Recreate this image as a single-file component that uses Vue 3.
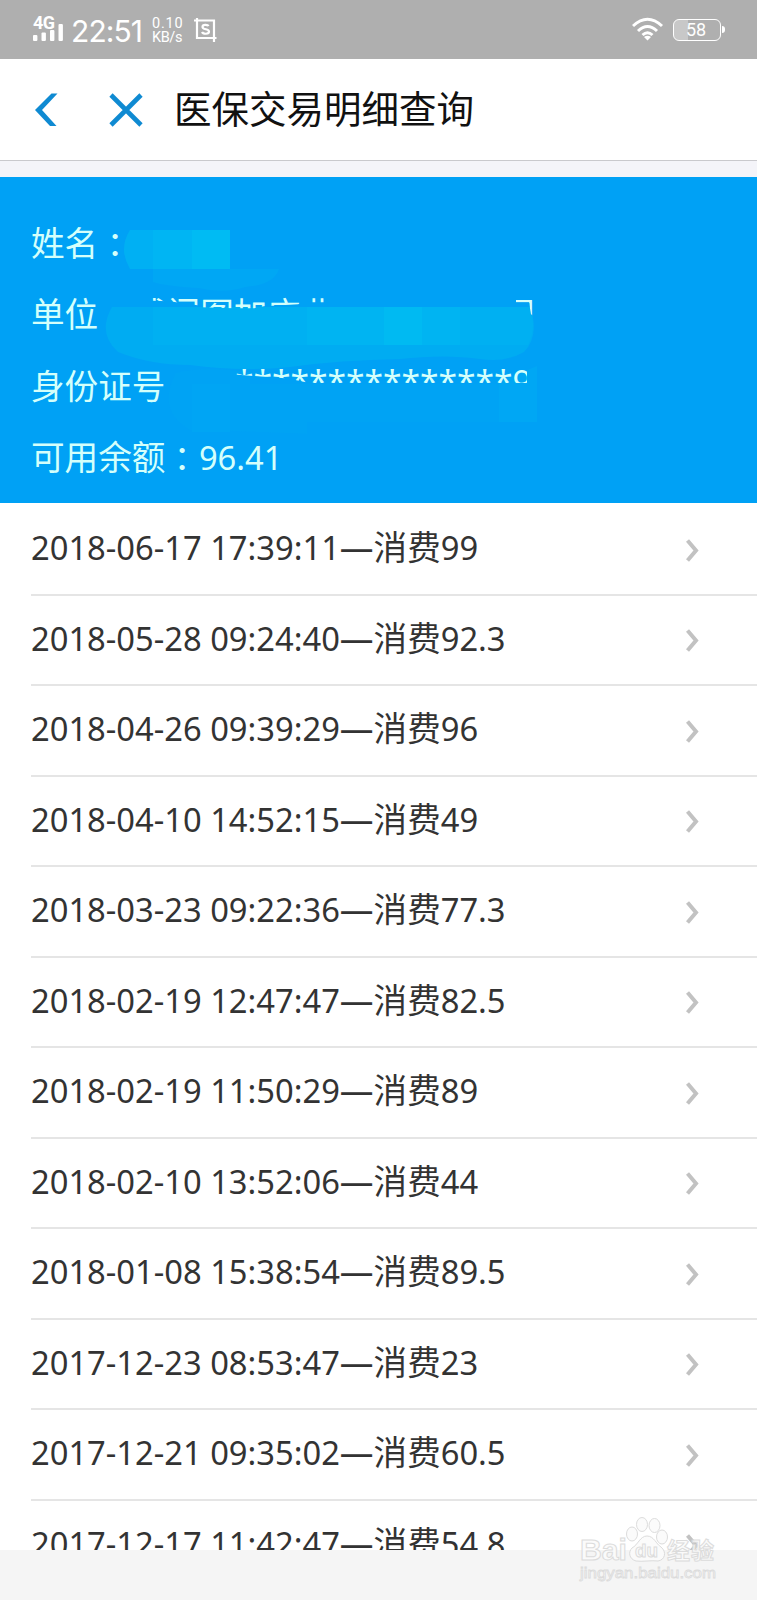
<script setup>
const records = [
  ['2018-06-17 17:39:11', '99'], ['2018-05-28 09:24:40', '92.3'],
  ['2018-04-26 09:39:29', '96'], ['2018-04-10 14:52:15', '49'],
  ['2018-03-23 09:22:36', '77.3'], ['2018-02-19 12:47:47', '82.5'],
  ['2018-02-19 11:50:29', '89'], ['2018-02-10 13:52:06', '44'],
  ['2018-01-08 15:38:54', '89.5'], ['2017-12-23 08:53:47', '23'],
  ['2017-12-21 09:35:02', '60.5'], ['2017-12-17 11:42:47', '54.8'],
]
</script>

<template>
  <div class="screen">
    <header class="status">
      <div class="signal">
        <b>4G</b>
        <svg width="30" height="17" viewBox="0 0 30 17" fill="#fff">
          <rect x="0" y="11" width="4.4" height="6" rx="1" /><rect x="8.5" y="8.5" width="4.4" height="8.5" rx="1" />
          <rect x="17" y="6" width="4.4" height="11" rx="1" /><rect x="25.5" y="0" width="4.4" height="17" rx="1" />
        </svg>
      </div>
      <span class="clock">22:51</span>
      <div class="speed"><span>0.10</span><span>KB/s</span></div>
      <div class="shot">
        <svg width="24" height="24" viewBox="0 0 24 24" fill="none" stroke="#fff" stroke-width="2.2">
          <path d="M3 0V20H21M0 2.5H20V24M19 20H22.5" />
          <path d="M14.500 8.200C14 6.600 8.500 6.200 8.500 9C8.500 12 15 10.600 15 13.600C15 16.500 9 16.300 8 14" />
        </svg>
      </div>
      <svg class="wifi" width="32" height="24" viewBox="0 0 32 24" fill="none" stroke="#fff" stroke-width="3">
        <path d="M1 9Q15.500 -4.500 30 9M6 14Q15.500 5 25 14M10.500 18Q15.500 13.400 20.500 18" />
        <path d="M12 20Q15.500 17.500 19 20L15.500 23.500Z" fill="#fff" stroke="none" />
      </svg>
      <div class="battery"><span>58</span></div>
    </header>

    <nav class="nav">
      <svg class="back" width="23" height="34" viewBox="0 0 23 34"><path d="M16.500 .5H22.500L7 17L21.500 33H15L0 17Z" fill="#0f8ad2" /></svg>
      <svg class="close" width="34" height="34" viewBox="0 0 34 34"><path d="M2 2L32 32M32 2L2 32" stroke="#0f8ad2" stroke-width="4.600" /></svg>
      <h1>医保交易明细查询</h1>
    </nav>

    <section class="card">
      <svg class="smudge" width="757" height="326" viewBox="0 177 757 326">
        <path d="M153 269H268V269H279Q274 285 245 287Q225 294 198 288Q165 286 153 282Z" fill="#00a7f4" />
        <path d="M130 230H230V269H130Q118 249 130 230Z" fill="#00b0f3" />
        <path d="M153 230H192V269H153Z" fill="#00b5f3" /><path d="M192 230H230V269H192Z" fill="#00bbf3" />
        <path d="M112 307H530Q540 335 524 352Q505 363 480 359Q445 354 400 359Q340 360 290 367Q240 372 190 365Q150 365 118 352Q97 333 112 307Z" fill="#00acf2" />
        <path d="M153 307H530Q537 327 528 345H153Z" fill="#00b0f2" />
        <path d="M307 307H384V345H307Z" fill="#00b4f2" /><path d="M384 307H422V345H384Z" fill="#00baf2" /><path d="M422 307H460V345H422Z" fill="#00b4f2" />
        <path d="M176 373Q200 366 250 372V384H537V422H307V434Q220 430 190 430Q156 410 176 373Z" fill="#00a3f4" />
        <path d="M192 384H230V432H192Z" fill="#00a5f4" /><path d="M499 382L537 366V422H499Z" fill="#00a7f4" />
      </svg>
      <p>姓名<span class="colon">：</span></p>
      <p>单位 <span class="unit">咸门图加应业</span><span class="unit-end">司</span></p>
      <p>身份证号<span class="idno">***************9</span></p>
      <p>可用余额<span class="colon">：</span><span class="num">96.41</span></p>
    </section>

    <main class="list">
      <div v-for="(r, i) in records" :key="i" class="row">
        <span class="label"><span class="num">{{ r[0] }}</span><span class="dash">—</span>消费<span class="num">{{ r[1] }}</span></span>
        <svg width="13" height="23" viewBox="0 0 13 23" fill="none" stroke="#c2c2c2" stroke-width="4"><path d="M1.500 1.500L10 11.500L1.500 21.500" /></svg>
      </div>
    </main>

    <div class="watermark">
      <svg width="150" height="80" viewBox="0 0 150 80" fill="#fbfbfb" stroke="#d9d9d9" stroke-width="1">
        <ellipse cx="62" cy="18" rx="5.500" ry="7" /><ellipse cx="72" cy="8.500" rx="5.500" ry="7" />
        <ellipse cx="84.500" cy="9.500" rx="5.500" ry="7" /><ellipse cx="92" cy="21" rx="5.500" ry="7" />
        <path d="M77 20C70 20 68 29 62 32C58 36 59 43 66 45C72 46 82 44 88 45C95 44 97 36 91 31C86 28 84 20 77 20Z" />
        <text x="10" y="44" font-size="29" font-weight="700" textLength="47" lengthAdjust="spacingAndGlyphs">Bai</text>
        <text x="65" y="41" font-size="19" font-weight="700" textLength="23" lengthAdjust="spacingAndGlyphs">du</text>
        <text x="97" y="43" font-size="23" font-weight="700" textLength="47">经验</text>
        <text x="10" y="62" font-size="15" textLength="136" lengthAdjust="spacingAndGlyphs" stroke-width=".8">jingyan.baidu.com</text>
      </svg>
    </div>
  </div>
</template>

<style>
body { margin: 0; background: #f5f5f5; }
</style>

<style scoped>
.screen { position: relative; width: 757px; height: 1600px; overflow: hidden; background: #f5f5f5; font-family: "Noto Sans CJK SC", sans-serif; }
.status { box-sizing: border-box; height: 59px; display: flex; align-items: flex-start; background: #afafaf; color: #fff; font-family: Roboto, sans-serif; padding-left: 33px; }
.signal { position: relative; width: 31px; height: 59px; }
.signal b { display: block; margin-top: 14px; font-size: 18px; line-height: 17px; letter-spacing: -.7px; }
.signal svg { position: absolute; left: 0; top: 24px; }
.clock { width: 77px; margin: 15px 0 0 7px; font: 30px/32px Inter, sans-serif; letter-spacing: -.9px; white-space: nowrap; }
.speed { width: 36px; margin: 17px 0 0 4px; display: flex; flex-direction: column; font-size: 14.5px; line-height: 14px; }
.speed span:first-child { letter-spacing: .8px; }
.speed span:last-child { letter-spacing: -.4px; }
.shot { margin: 18px 0 0 6px; }
.wifi { margin: 17px 0 0 414px; }
.battery { position: relative; box-sizing: border-box; width: 48px; height: 22px; margin: 19px 0 0 9px; border: 1.5px solid #fff; border-radius: 6px; font-size: 18px; line-height: 20px; text-align: center; background: linear-gradient(90deg, #c8c8c8 30%, transparent 30%); }
.battery::after { content: ""; position: absolute; right: -5px; top: 6px; width: 3px; height: 7px; border-radius: 0 3px 3px 0; background: #fff; }
.battery span { margin-left: -2px; }
.nav { box-sizing: border-box; height: 102px; border-bottom: 1px solid #c9c9cd; background: #fff; display: flex; align-items: center; padding-left: 35px; }
.close { margin-left: 51px; }
h1 { margin: -5px 0 0 31px; font-weight: 400; font-size: 37.5px; line-height: 56px; color: #111; }
.card { position: relative; box-sizing: border-box; height: 342px; border-top: 16px solid #f4f4f9; padding: 29px 0 0 31px; background: #00a1f5; color: #d4fffb; font-size: 33.6px; }
.card p { position: relative; margin: 0; height: 71.3px; line-height: 71.3px; white-space: nowrap; }
.colon { position: relative; top: 2px; line-height: 1; font-family: "Noto Sans CJK TC", sans-serif; }
.smudge { position: absolute; left: 0; top: 0; }
.unit { position: absolute; left: 102px; top: 0; clip-path: polygon(0 0, 100% 0, 100% 25px, 84% 25px, 82% 27px, 65% 29px, 60% 31px, 50% 31px, 34% 30px, 32% 28px, 18% 24px, 0 23px); }
.unit-end { position: absolute; left: 471px; top: 0; clip-path: polygon(14px 0, 100% 0, 100% 40px, 29px 37px, 27px 25px, 14px 25px); }
.card .idno { position: absolute; left: 204px; top: -3px; font-family: "Noto Sans", sans-serif; clip-path: polygon(0 0, 292px 0, 292px 37.5px, 25% 37.5px, 18% 33px, 0 29px); }
.num { font-family: "Noto Sans", sans-serif; font-size: 32.7px; }
.dash { font-family: "Noto Sans", sans-serif; font-size: 33.7px; }
.list { height: 1046.500px; overflow: hidden; background: #fff; padding-top: 2px; box-sizing: border-box; }
.row { box-sizing: border-box; height: 90.5px; margin-left: 31px; border-bottom: 2px solid #e5e5e5; display: flex; justify-content: space-between; align-items: center; padding-right: 58px; }
.row svg { margin-top: 2px; }
.label { font-size: 33.6px; line-height: 80px; margin-top: -4px; color: #333; white-space: nowrap; }
.watermark { position: absolute; left: 570px; top: 1516px; width: 150px; height: 80px; opacity: .9; }
.watermark text { font-family: "Liberation Sans", "Noto Sans CJK SC", sans-serif; }
</style>
